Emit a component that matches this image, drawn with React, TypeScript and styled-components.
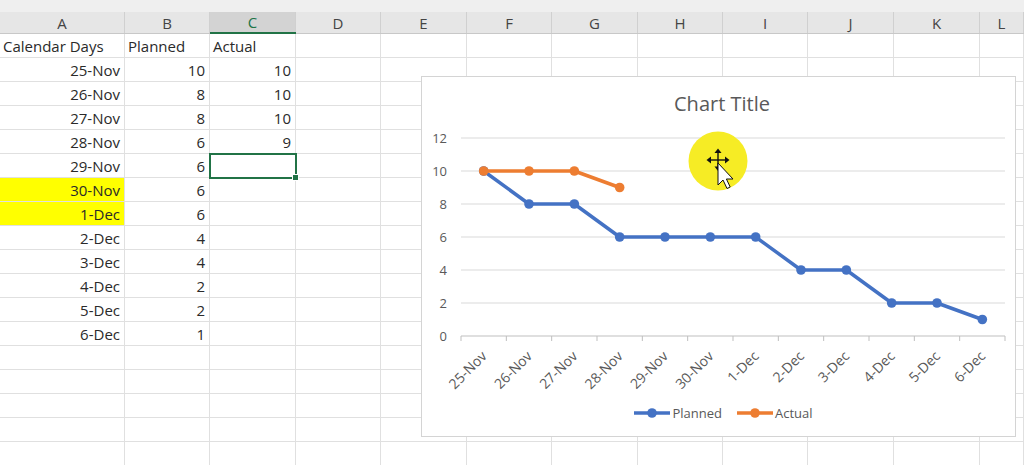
import React from 'react';
import styled, { createGlobalStyle } from 'styled-components';

const GlobalStyle = createGlobalStyle`
  html, body {
    margin: 0;
    padding: 0;
    background: #ffffff;
    overflow: hidden;
  }
  body {
    font-family: 'Open Sans', 'Liberation Sans', sans-serif;
  }
`;

const Page = styled.div`
  position: relative;
  width: 1024px;
  height: 465px;
  overflow: hidden;
  background: #ffffff;
`;

const Sheet = styled.div`
  display: grid;
  grid-template-columns: 125px 85px 86px 85px 86px 85px 86px 85px 85px 86px 86px 1fr;
  grid-template-rows: 34px;
  grid-auto-rows: 24px;
`;

const ColHeader = styled.div<{ $active?: boolean }>`
  box-sizing: border-box;
  display: flex;
  align-items: flex-end;
  padding-top: 12px;
  background: linear-gradient(#efefef 0, #efefef 12px, #e6e6e6 12px);
  border-bottom: ${p => (p.$active ? '2px solid #217346' : '1px solid #c8c8c8')};
`;

const ColLabel = styled.div<{ $active?: boolean }>`
  box-sizing: border-box;
  flex: 1;
  height: 100%;
  display: flex;
  align-items: center;
  justify-content: center;
  font-size: 15px;
  color: ${p => (p.$active ? '#217346' : '#444444')};
  background: ${p => (p.$active ? '#d3d3d3' : 'transparent')};
  border-right: 1px solid #d0d0d0;
`;

const Cell = styled.div<{ $align?: 'left' | 'right'; $highlight?: boolean; $selected?: boolean }>`
  position: relative;
  box-sizing: border-box;
  display: flex;
  align-items: center;
  justify-content: ${p => (p.$align === 'right' ? 'flex-end' : 'flex-start')};
  padding: 0 4px 0 3px;
  font-size: 15px;
  color: #2a2a2a;
  white-space: nowrap;
  background: ${p => (p.$highlight ? '#ffff00' : '#ffffff')};
  border-right: 1px solid #e0e0e0;
  border-bottom: 1px solid #e0e0e0;
  ${p =>
    p.$selected &&
    `
    outline: 2px solid #217346;
    outline-offset: -1px;
    z-index: 1;
    &::after {
      content: '';
      position: absolute;
      right: -4px;
      bottom: -4px;
      width: 5px;
      height: 5px;
      background: #217346;
      border: 1px solid #ffffff;
    }
  `}
`;

const ChartBox = styled.div`
  position: absolute;
  left: 421px;
  top: 76px;
  width: 595px;
  height: 361px;
  box-sizing: border-box;
  border: 1px solid #d4d4d4;
  background: #ffffff;
  display: flex;
  flex-direction: column;
`;

const ChartTitle = styled.div`
  margin-top: 14px;
  padding-left: 7px;
  line-height: 26px;
  text-align: center;
  font-size: 20px;
  color: #595959;
`;

const PlotSvg = styled.svg`
  display: block;
  font-family: 'Open Sans', 'Liberation Sans', sans-serif;
`;

const Legend = styled.div`
  height: 32px;
  display: flex;
  align-items: center;
  justify-content: center;
  gap: 15px;
  padding-left: 10px;
  font-size: 13px;
  color: #595959;
`;

const LegendItem = styled.div`
  display: flex;
  align-items: center;
  gap: 2px;
`;

const CursorOverlay = styled.svg`
  position: absolute;
  left: 688px;
  top: 131px;
  pointer-events: none;
`;

const columns = ['A', 'B', 'C', 'D', 'E', 'F', 'G', 'H', 'I', 'J', 'K', 'L'];

type Row = { day: string; planned: string; actual: string; hl?: boolean };

const rows: Row[] = [
  { day: '25-Nov', planned: '10', actual: '10' },
  { day: '26-Nov', planned: '8', actual: '10' },
  { day: '27-Nov', planned: '8', actual: '10' },
  { day: '28-Nov', planned: '6', actual: '9' },
  { day: '29-Nov', planned: '6', actual: '' },
  { day: '30-Nov', planned: '6', actual: '', hl: true },
  { day: '1-Dec', planned: '6', actual: '', hl: true },
  { day: '2-Dec', planned: '4', actual: '' },
  { day: '3-Dec', planned: '4', actual: '' },
  { day: '4-Dec', planned: '2', actual: '' },
  { day: '5-Dec', planned: '2', actual: '' },
  { day: '6-Dec', planned: '1', actual: '' },
];

const planned = [10, 8, 8, 6, 6, 6, 6, 4, 4, 2, 2, 1];
const actual = [10, 10, 10, 9];

const BLUE = '#4472c4';
const ORANGE = '#ed7d31';

const plotLeft = 461;
const plotRight = 1005;
const step = (plotRight - plotLeft) / 12;
const px = (i: number) => plotLeft + step * (i + 0.5);
const py = (v: number) => 335 - 16.5 * v;

function Series({ values, color }: { values: number[]; color: string }) {
  const pts = values.map((v, i) => `${px(i)},${py(v)}`).join(' ');
  return (
    <g>
      <polyline points={pts} fill="none" stroke={color} strokeWidth={3.5} strokeLinejoin="round" />
      {values.map((v, i) => (
        <circle key={i} cx={px(i)} cy={py(v)} r={4.8} fill={color} />
      ))}
    </g>
  );
}

function LegendMarker({ color }: { color: string }) {
  return (
    <svg width={36} height={10}>
      <line x1={0} y1={5} x2={36} y2={5} stroke={color} strokeWidth={3.5} />
      <circle cx={18} cy={5} r={4.8} fill={color} />
    </svg>
  );
}

function Chart() {
  return (
    <ChartBox>
      <ChartTitle>Chart Title</ChartTitle>
      <PlotSvg width={593} height={280} viewBox="422 116 593 280">
        {[2, 4, 6, 8, 10, 12].map(v => (
          <line key={v} x1={plotLeft} y1={py(v)} x2={plotRight} y2={py(v)} stroke="#d9d9d9" strokeWidth={1} />
        ))}
        <line x1={plotLeft} y1={335} x2={plotRight} y2={335} stroke="#bfbfbf" strokeWidth={1} />
        {Array.from({ length: 13 }).map((_, k) => (
          <line key={k} x1={plotLeft + step * k} y1={335} x2={plotLeft + step * k} y2={340} stroke="#bfbfbf" />
        ))}
        {[0, 2, 4, 6, 8, 10, 12].map(v => (
          <text key={v} x={447} y={py(v) + 4.5} textAnchor="end" fontSize={13} fill="#595959">
            {v}
          </text>
        ))}
        {rows.map((r, i) => (
          <text
            key={r.day}
            x={px(i) + 4}
            y={356}
            textAnchor="end"
            fontSize={14}
            fill="#595959"
            transform={`rotate(-45 ${px(i) + 4} 356)`}
          >
            {r.day}
          </text>
        ))}
        <Series values={planned} color={BLUE} />
        <Series values={actual} color={ORANGE} />
      </PlotSvg>
      <Legend>
        <LegendItem>
          <LegendMarker color={BLUE} />
          Planned
        </LegendItem>
        <LegendItem>
          <LegendMarker color={ORANGE} />
          Actual
        </LegendItem>
      </Legend>
    </ChartBox>
  );
}

function MoveCursor() {
  return (
    <CursorOverlay width={60} height={62} viewBox="0 0 60 62">
      <circle cx={30} cy={30} r={29.5} fill="#f6ec25" />
      <g stroke="#111" strokeWidth={1.4}>
        <line x1={22} y1={29} x2={38} y2={29} />
        <line x1={30} y1={21} x2={30} y2={36} />
      </g>
      <g fill="#111">
        <polygon points="30,17.5 26.5,22 33.5,22" />
        <polygon points="18.5,29 23,25.5 23,32.5" />
        <polygon points="41.5,29 37,25.5 37,32.5" />
        <polygon points="30,40 26.5,35.5 33.5,35.5" />
      </g>
      <path
        d="M30 32 L30 54 L35 49 L39 57.5 L42.2 56 L38.4 48 L45 48 Z"
        fill="#ffffff"
        stroke="#111"
        strokeWidth={1}
        strokeLinejoin="round"
      />
    </CursorOverlay>
  );
}

export default function App() {
  const totalRows = 18;
  const body: React.ReactNode[] = [];
  for (let r = 0; r < totalRows; r++) {
    columns.forEach((c, ci) => {
      let text = '';
      let align: 'left' | 'right' = 'right';
      let hl = false;
      let selected = false;
      if (r === 0) {
        align = 'left';
        if (c === 'A') text = 'Calendar Days';
        if (c === 'B') text = 'Planned';
        if (c === 'C') text = 'Actual';
      } else if (r - 1 < rows.length) {
        const row = rows[r - 1];
        if (c === 'A') {
          text = row.day;
          hl = !!row.hl;
        }
        if (c === 'B') text = row.planned;
        if (c === 'C') text = row.actual;
      }
      if (r === 5 && c === 'C') selected = true;
      body.push(
        <Cell key={`${r}-${ci}`} $align={align} $highlight={hl} $selected={selected}>
          {text}
        </Cell>
      );
    });
  }

  return (
    <Page>
      <GlobalStyle />
      <Sheet>
        {columns.map(c => (
          <ColHeader key={c} $active={c === 'C'}>
            <ColLabel $active={c === 'C'}>{c}</ColLabel>
          </ColHeader>
        ))}
        {body}
      </Sheet>
      <Chart />
      <MoveCursor />
    </Page>
  );
}
